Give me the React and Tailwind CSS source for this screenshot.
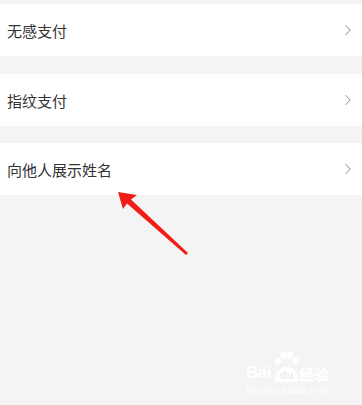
import { ChevronRight } from 'lucide-react'

const rows = [
  { label: '无感支付', gap: 'mt-0' },
  { label: '指纹支付', gap: 'mt-[18px]' },
  { label: '向他人展示姓名', gap: 'mt-[17px]' },
]

function Row({ label, gap }) {
  return (
    <div className={`${gap} h-[52px] bg-white flex items-center justify-between pl-[7px] pr-[5px]`}>
      <span className="text-[15px] text-[#333333] leading-none">{label}</span>
      <ChevronRight size={18} strokeWidth={1.4} className="text-[#9a9a9a]" />
    </div>
  )
}

function Watermark() {
  return (
    <div className="absolute left-[246px] top-[350px] flex flex-col items-start text-white">
      <div className="flex items-end leading-none h-[32px]">
        <span className="text-[17px] font-bold tracking-tight leading-none mb-[1px]" style={{ fontFamily: '"Liberation Sans", Arial, sans-serif' }}>Bai</span>
        <div className="relative w-[25px] h-[32px] ml-[3px]">
          <svg width="25" height="16" viewBox="0 0 25 16" className="absolute top-0 left-0">
            <ellipse cx="4" cy="11" rx="3" ry="3.6" fill="white" />
            <ellipse cx="9.5" cy="5" rx="3" ry="3.8" fill="white" />
            <ellipse cx="16" cy="5" rx="3" ry="3.8" fill="white" />
            <ellipse cx="21.5" cy="11" rx="2.8" ry="3.6" fill="white" />
          </svg>
          <div className="absolute bottom-0 left-[1px] w-[23px] h-[15px] rounded-t-full bg-white flex items-end justify-center">
            <span className="text-[11px] font-bold leading-none text-[#ececec] mb-[1px]" style={{ fontFamily: '"Liberation Sans", Arial, sans-serif' }}>du</span>
          </div>
        </div>
        <span className="text-[15px] font-bold leading-none mb-[1px]">经验</span>
      </div>
      <span className="text-[11px] mt-[2px] leading-none" style={{ fontFamily: '"Liberation Serif", serif' }}>jingyan.baidu.com</span>
    </div>
  )
}

export default function App() {
  return (
    <div
      className="relative w-[362px] h-[405px] bg-[#f4f4f4] overflow-hidden pt-[4px] flex flex-col"
      style={{ fontFamily: '"Noto Sans CJK SC", "Noto Sans", sans-serif' }}
    >
      {rows.map(r => (
        <Row key={r.label} label={r.label} gap={r.gap} />
      ))}

      <svg className="absolute left-0 top-0" width="362" height="405" viewBox="0 0 362 405">
        <polygon
          points="118,192 137,195 131,199.5 188,253 186,255 127,203.5 123,209"
          fill="#f21d16"
        />
      </svg>

      <Watermark />
    </div>
  )
}
